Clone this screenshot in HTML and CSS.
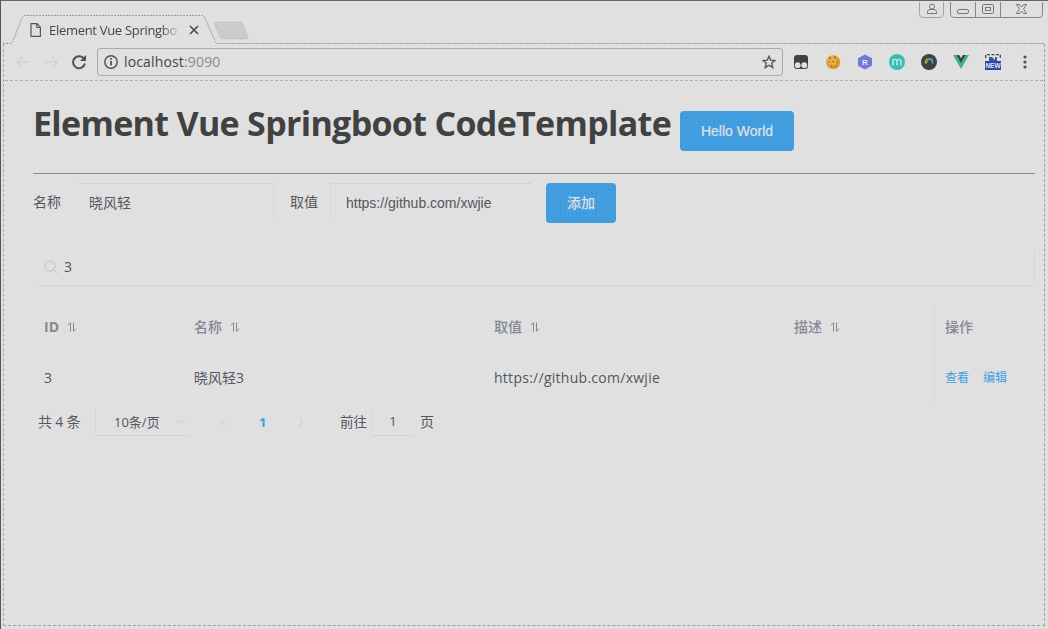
FILE: index.html
```html
<!DOCTYPE html>
<html lang="zh-CN">
<head>
<meta charset="utf-8">
<title>Element Vue Springboot CodeTemplate</title>
<link rel="stylesheet" href="styles.css">
</head>
<body>
<svg width="0" height="0" class="defs"><symbol id="sort" viewBox="0 0 10 10"><path d="M.8 3.200L3.500 .8V9.500M6.500 .5V9.200L9.200 6.800" fill="none" stroke="#858891"/></symbol></svg>
<div class="window">
  <header class="titlebar">
    <svg class="frame" width="1048" height="44" viewBox="0 0 1048 44" fill="none">
      <path class="edge" d="M3.500 44V43.500H10Q12 43.500 13 41L22 18Q23 15.500 25 15.500H202Q204 15.500 205 18L215 41Q216 43.500 218 43.500H1044"/>
      <path class="new-tab" d="M216 22H240Q242 22 243 24L248 37Q248.500 39 246 39H223Q221 39 220 37L214.500 24Q214 22 216 22Z"/>
      <path class="controls" d="M919.500 2V14Q919.500 17.500 923 17.500H940Q943.500 17.500 943.500 14V2"/>
      <path class="controls dark" d="M950.500 2V14Q950.500 17.500 954 17.500H1039Q1042.500 17.500 1042.500 14V2M975.500 2V17M1000.500 2V17"/>
      <g class="glyph">
        <circle cx="932" cy="6.500" r="2.500"/><path d="M927.500 13.500V11.500Q928 9.500 930 9.500H934Q936 9.500 936.500 11.500V13.500Z"/>
        <rect x="957.500" y="9.500" width="11" height="4" rx="1.500"/>
        <rect x="982.500" y="4.500" width="11" height="9" rx="1"/><rect x="985.500" y="7.500" width="5" height="3"/>
        <path d="M1016.500 4.500H1019.500L1021.500 7L1023.500 4.500H1026.500L1023.500 9L1026.500 13.500H1023.500L1021.500 11L1019.500 13.500H1016.500L1019.500 9Z"/>
      </g>
    </svg>
    <div class="tab">
      <svg width="12" height="14" viewBox="0 0 12 14" fill="none" stroke="#555" stroke-width="1.200"><path d="M1 .7H7L10.400 4.200V13.300H1ZM6.800 .7V4.500H10.400"/></svg>
      <span class="tab-title">Element Vue Springbo</span>
      <svg width="10" height="10" viewBox="0 0 10 10" stroke="#505050" stroke-width="1.700"><path d="M1 1L9 9M9 1L1 9"/></svg>
    </div>
  </header>
  <nav class="toolbar">
    <div class="nav-icons">
      <svg width="14" height="14" viewBox="0 0 14 14" class="disabled"><path d="M13 7H1M6 2L1 7L6 12"/></svg>
      <svg width="14" height="14" viewBox="0 0 14 14" class="disabled"><path d="M1 7H13M8 2L13 7L8 12"/></svg>
      <svg width="16" height="16" viewBox="0 0 16 16"><path d="M13 4.800A6 6 0 1 0 13.900 9.500" fill="none" stroke="#505050" stroke-width="2"/><path d="M15 1V7H9Z" fill="#505050"/></svg>
    </div>
    <div class="address">
      <svg width="14" height="14" viewBox="0 0 14 14"><circle cx="7" cy="7" r="6.200" fill="none" stroke="#505050" stroke-width="1.400"/><path d="M6.200 6H7.900V10.500H6.200ZM6.200 3H7.900V4.800H6.200Z" fill="#505050"/></svg>
      <span class="url">localhost<i>:9090</i></span>
      <svg class="star" width="14" height="14" viewBox="0 0 14 14"><path d="M7 1.200L8.700 5.200L13 5.500L9.700 8.300L10.800 12.600L7 10.300L3.200 12.600L4.300 8.300L1 5.500L5.300 5.200Z" fill="none" stroke="#505050" stroke-width="1.300"/></svg>
    </div>
    <div class="extensions">
      <svg width="16" height="16" viewBox="0 0 16 16"><rect x="1" y="1" width="14" height="14" rx="3" fill="#414141"/><circle cx="4.700" cy="11.200" r="2.900" fill="#e0e0e0"/><circle cx="11.300" cy="11.200" r="2.900" fill="#e0e0e0"/></svg>
      <svg width="16" height="16" viewBox="0 0 16 16"><circle cx="8.200" cy="8.200" r="7" fill="#e09a2c"/><circle cx="7" cy="7" r="5" fill="#e8ad45"/><g fill="#8d5b28"><circle cx="5" cy="4" r=".9"/><circle cx="10" cy="3.500" r=".9"/><circle cx="4" cy="8" r=".7"/><circle cx="8" cy="7.500" r=".8"/><circle cx="12" cy="8.500" r=".7"/><circle cx="6.500" cy="12" r=".8"/><circle cx="10.500" cy="12" r=".7"/></g></svg>
      <svg width="16" height="16" viewBox="0 0 16 16"><path d="M8 .5L15 4.200V11.800L8 15.500L1 11.800V4.200Z" fill="#7478dc"/><text x="8" y="11" class="badge">R</text></svg>
      <svg width="16" height="16" viewBox="0 0 16 16"><circle cx="8" cy="8" r="8" fill="#36bdb7"/><path d="M4 11.500V5.500M4 7Q4.300 5.500 6 5.500Q8 5.500 8 7.500V11.500M8 7.500Q8 5.500 10 5.500Q12 5.500 12 7.500V11.500" fill="none" stroke="#dff3f0" stroke-width="1.200"/></svg>
      <svg width="16" height="16" viewBox="0 0 16 16" fill="none"><circle cx="8" cy="8" r="8" fill="#414141"/><path d="M4.800 9.500Q4 6 7 5" stroke="#8ac43b" stroke-width="1.800"/><path d="M7 5Q11 4 11.500 8" stroke="#38b9bd" stroke-width="1.800"/><path d="M5.500 9.500Q5.800 7 7.500 7" stroke="#df8c45" stroke-width="1"/><path d="M11.500 8V10" stroke="#c344b4" stroke-width="1.500"/></svg>
      <svg width="16" height="16" viewBox="0 0 16 16"><path d="M0 1H3.300L8 9.200L12.700 1H16L8 15Z" fill="#3eb580"/><path d="M3.300 1H6.200L8 4.200L9.800 1H12.700L8 9.200Z" fill="#34435a"/></svg>
      <svg width="16" height="16" viewBox="0 0 16 16"><path d="M.7 4V.7H15.300V4" fill="none" stroke="#444" stroke-width="1.300" stroke-dasharray="3 1.500"/><path d="M4 3H7L10 6V3H12V8H4Z" fill="#285aad"/><rect y="7" width="16" height="9" fill="#2c48a0"/><text x="8" y="14" class="badge new">NEW</text></svg>
    </div>
    <svg class="menu" width="4" height="14" viewBox="0 0 4 14" fill="#505050"><circle cx="2" cy="2" r="1.600"/><circle cx="2" cy="7" r="1.600"/><circle cx="2" cy="12" r="1.600"/></svg>
  </nav>
  <main>
    <div class="heading"><h1>Element Vue Springboot CodeTemplate</h1><button class="hello">Hello World</button></div>
    <form class="add-form">
      <label>名称</label><div class="field name">晓风轻</div>
      <label>取值</label><div class="field value">https://github.com/xwjie</div>
      <button type="button" class="add">添加</button>
    </form>
    <div class="search">
      <svg width="14" height="14" viewBox="0 0 14 14" fill="none" stroke="#b8c2d4"><circle cx="6" cy="6" r="5"/><path d="M9.500 9.500L13 13"/></svg>
      <span>3</span>
    </div>
    <section class="table">
      <div class="row head">
        <div><span class="id">ID</span><svg class="sort"><use href="#sort"/></svg></div>
        <div>名称<svg class="sort"><use href="#sort"/></svg></div>
        <div>取值<svg class="sort"><use href="#sort"/></svg></div>
        <div>描述<svg class="sort"><use href="#sort"/></svg></div>
        <div class="ops">操作</div>
      </div>
      <div class="row">
        <div>3</div><div>晓风轻3</div><div class="link">https://github.com/xwjie</div><div></div>
        <div class="ops actions"><a>查看</a><a>编辑</a></div>
      </div>
    </section>
    <footer class="pager">
      <span class="total">共 4 条</span>
      <div class="size"><span>10条/页</span><svg width="8" height="6" viewBox="0 0 8 6"><path d="M.5 1L4 4.500L7.500 1"/></svg></div>
      <svg class="prev" width="6" height="10" viewBox="0 0 6 10"><path d="M5 .8L1 5L5 9.200"/></svg>
      <b>1</b>
      <svg class="next" width="6" height="10" viewBox="0 0 6 10"><path d="M1 .8L5 5L1 9.200"/></svg>
      <span class="goto">前往</span><div class="jump">1</div><span>页</span>
    </footer>
  </main>
</div>
</body>
</html>
```
FILE: styles.css
```css
*, *::after { box-sizing: border-box; }
body { margin: 0; background: #e0e0e0; }
.defs { position: absolute; }
.window {
  position: relative; width: 1048px; height: 629px; overflow: hidden;
  display: flex; flex-direction: column;
  font-family: "Open Sans", "Noto Sans CJK SC", sans-serif;
  font-size: 14px; line-height: 20px; color: #53565f;
  background: #e0e0e0; border-top: 1px solid #686464; border-left: 1px solid #555;
}
.window::after {
  content: ""; position: absolute; left: 2px; top: 43px; width: 1042px; height: 582px;
  border: 1px dashed #a0a0a0; border-top: 0; border-left-color: #aaa6a6; pointer-events: none;
}
.titlebar { position: relative; flex: 0 0 43px; }
.frame { position: absolute; left: -1px; top: -1px; }
.edge { stroke: #999; stroke-dasharray: 2 1; }
.new-tab { fill: #cbcbcb; stroke: #bbb; stroke-dasharray: 1 1; }
.controls { stroke: #a4a4a4; }
.controls.dark { stroke: #858585; }
.glyph { stroke: #777; fill: none; }
.tab { position: relative; display: flex; align-items: center; padding: 19px 0 0 29px; height: 38px; }
.tab-title {
  width: 130px; margin-left: 7px; margin-right: 10px; white-space: nowrap;
  font-size: 13px; color: #454545; letter-spacing: -.3px;
  -webkit-mask-image: linear-gradient(90deg, #000 112px, transparent 132px);
  mask-image: linear-gradient(90deg, #000 112px, transparent 132px);
}
.toolbar {
  flex: 0 0 37px; margin: 0 5px 0 4px; padding-left: 11px; display: flex; align-items: center;
  border-bottom: 1px dashed #b0b0b0;
}
.nav-icons { width: 81px; display: flex; align-items: center; gap: 14px; }
.disabled { fill: none; stroke: #c6c6c6; stroke-width: 1.500; stroke-dasharray: 1 1; }
.nav-icons svg:last-child { margin-left: -1px; }
.address {
  width: 686px; height: 28px; display: flex; align-items: center; padding: 0 6px 0 6px;
  border: 1px solid #aaa; border-radius: 3px;
}
.url { margin-left: 6px; font-size: 14px; color: #454545; letter-spacing: .15px; }
.url i { color: #8b8b8b; font-style: normal; }
.star { margin-left: auto; }
.extensions { display: flex; gap: 16px; margin-left: 10px; }
.extensions svg { display: block; }
.badge { font: bold 8px "Liberation Sans", sans-serif; fill: #e4e4f2; text-anchor: middle; }
.badge.new { font-size: 6.500px; }
.menu { margin-left: 22px; }
main { padding: 0 11px 0 32px; }
.heading { height: 93px; display: flex; align-items: flex-start; border-bottom: 1px solid #8b8b8b; width: 1002px; }
h1 { margin: 19px 0 0; width: 647px; font-size: 34px; line-height: 46px; font-weight: 700; letter-spacing: -.68px; color: #414141; white-space: nowrap; }
button {
  height: 40px; border: 0; border-radius: 4px; padding: 0; color: #e0e0e0;
  font: 500 14px "Liberation Sans", "Noto Sans CJK SC", sans-serif;
  background: #419fe0 radial-gradient(circle at 2.500px 2.500px, #3a84dc 0 .5px, transparent .6px) 0 0 / 4px 4px;
}
.hello { width: 114px; margin-top: 30px; -webkit-text-stroke: .2px; }
.add { width: 70px; margin-left: 15px; padding-bottom: 2px; }
.add-form { display: flex; height: 40px; margin-top: 9px; line-height: 38px; }
.field { height: 34px; border-top: 1px dotted #bacbd6; }
.field.name { width: 195px; margin-left: 18px; padding-left: 10px; border-right: 1px dotted #c7d4da; margin-right: 16px; }
.field.value {
  width: 201px; margin-left: 12px; padding-left: 15px; border-left: 1px dotted #c7d4da;
  font-family: "Liberation Sans", sans-serif;
}
.search {
  width: 1002px; height: 37px; margin-top: 26px; padding: 0 0 2px 11px; display: flex; align-items: center; gap: 6px;
  background:
    repeating-linear-gradient(90deg, #b5c9d6 0 1px, transparent 1px 2px) 5px 100% / 993px 1px no-repeat,
    repeating-linear-gradient(#bdd0d8 0 1px, transparent 1px 2px) 100% 2px / 1px 32px no-repeat;
}
.table { margin-top: 20px; width: 1000px; }
.row { display: grid; grid-template-columns: 150px 300px 300px 151px 99px; height: 54px; align-items: center; }
.row > div { padding: 6px 0 0 11px; }
.row .ops { height: 100%; padding-left: 10px; display: flex; align-items: center; border-left: 1px dotted #c5dad3; }
.row.head { height: 42px; color: #858891; font-weight: 500; }
.row.head > div { padding-top: 0; }
.id { font-weight: 700; }
.sort { width: 10px; height: 10px; margin-left: 8px; }
.link { letter-spacing: .27px; }
.actions { gap: 14px; font-size: 12px; color: #419fe0; }
.pager { display: flex; align-items: center; height: 30px; padding-left: 5px; margin-top: 5px; white-space: nowrap; }
.pager path { fill: none; stroke: #bdcbd3; }
.total { width: 57px; letter-spacing: -.2px; }
.size { width: 95px; height: 28px; display: flex; align-items: center; padding-left: 18px; border-left: 1px dotted #c1d2d8; border-bottom: 1px dotted #bacbd6; }
.size span { width: 63px; font-size: 13px; }
.prev { margin-left: 30px; }
.pager b { margin: 0 30px 0 33px; width: 9px; color: #419fe0; font-size: 13px; }
.goto { margin-left: 36px; width: 31px; font-size: 13.500px; }
.jump { width: 43px; height: 28px; line-height: 26px; text-align: center; border-left: 1px dotted #c1d2d8; border-bottom: 1px dotted #bacbd6; margin-right: 6px; font-size: 13px; }
```
